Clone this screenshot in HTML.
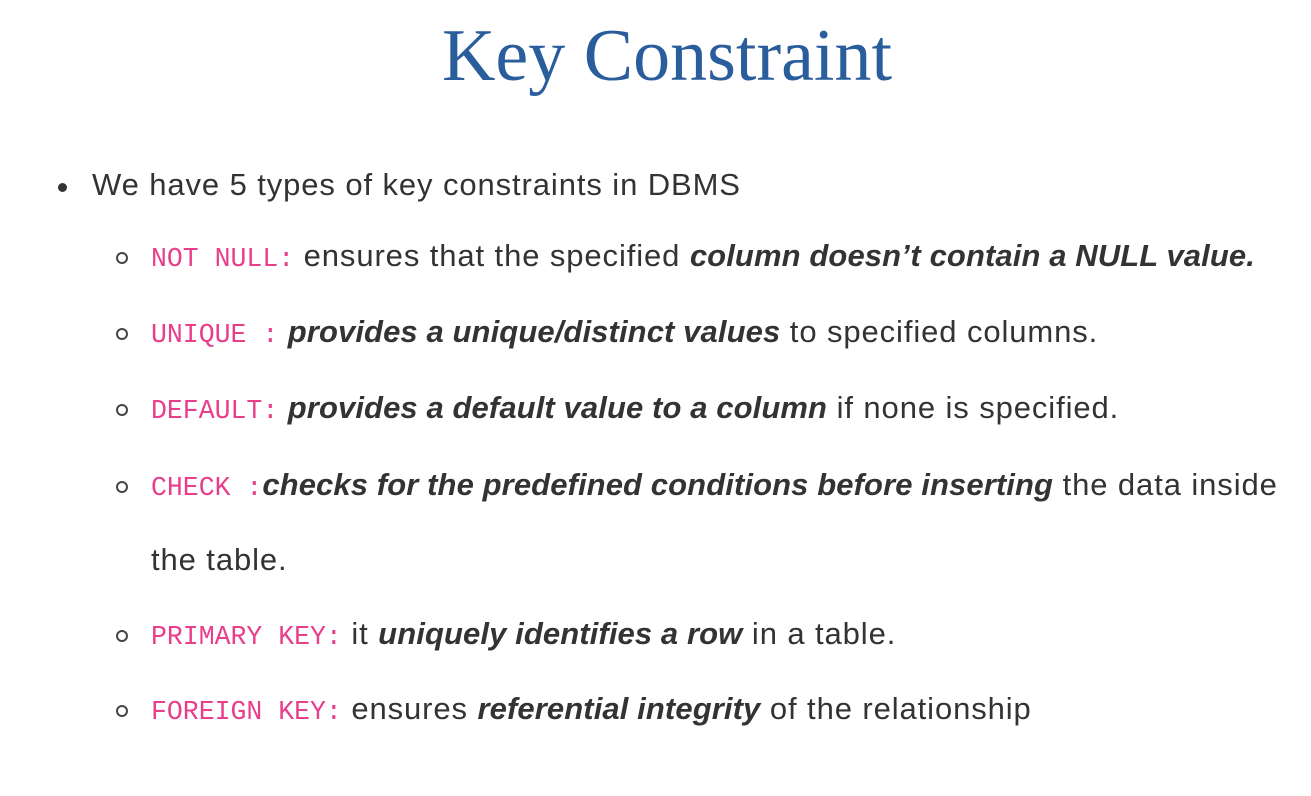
<!DOCTYPE html>
<html><head><meta charset="utf-8"><style>
body{margin:0;background:#fff;width:1311px;height:796px;overflow:hidden;position:relative;font-family:"Liberation Sans",sans-serif;color:#333}
h1{position:absolute;left:0;width:1334px;text-align:center;top:14px;margin:0;font-family:"Liberation Serif",serif;font-weight:normal;font-size:74px;color:#2a5d9c}
.l{position:absolute;font-size:31px;white-space:nowrap;letter-spacing:0.9px}
.c{font-family:"Liberation Mono",monospace;color:#e83e8c;font-size:26.5px;letter-spacing:0}
b{font-style:italic;letter-spacing:0.1px}
.dot{position:absolute;width:9px;height:9px;border-radius:50%;background:#333}
.o{position:absolute;width:8px;height:8px;border-radius:50%;border:2px solid #444}
</style></head><body>
<h1>Key Constraint</h1>
<div class="dot" style="left:58px;top:183px"></div>
<div class="l" style="left:92px;top:167px">We have 5 types of key constraints in DBMS</div>
<div class="o" style="left:116px;top:252px"></div>
<div class="l" style="left:151px;top:238px"><span class="c">NOT NULL:</span> ensures that the specified <b>column doesn’t contain a NULL value.</b></div>
<div class="o" style="left:116px;top:328px"></div>
<div class="l" style="left:151px;top:314px"><span class="c">UNIQUE :</span> <b>provides a unique/distinct values</b> to specified columns.</div>
<div class="o" style="left:116px;top:404px"></div>
<div class="l" style="left:151px;top:390px"><span class="c">DEFAULT:</span> <b>provides a default value to a column</b> if none is specified.</div>
<div class="o" style="left:116px;top:481px"></div>
<div class="l" style="left:151px;top:467px"><span class="c">CHECK :</span><b>checks for the predefined conditions before inserting</b> the data inside</div>
<div class="l" style="left:151px;top:542px">the table.</div>
<div class="o" style="left:116px;top:630px"></div>
<div class="l" style="left:151px;top:616px"><span class="c">PRIMARY KEY:</span> it <b>uniquely identifies a row</b> in a table.</div>
<div class="o" style="left:116px;top:705px"></div>
<div class="l" style="left:151px;top:691px"><span class="c">FOREIGN KEY:</span> ensures <b>referential integrity</b> of the relationship</div>
</body></html>
